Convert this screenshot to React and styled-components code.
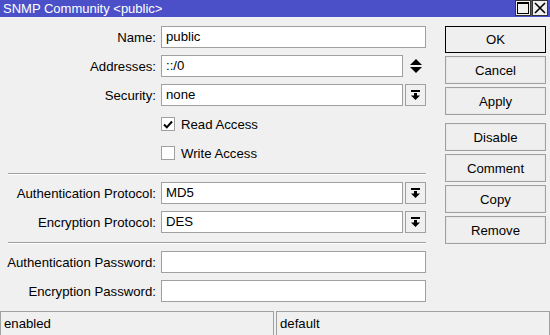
import React from 'react'
import styled, { createGlobalStyle } from 'styled-components'

const GlobalStyle = createGlobalStyle`
  html, body {
    margin: 0;
    padding: 0;
    background: #f0f0f0;
  }
  * { box-sizing: border-box; }
`

const Window = styled.div`
  width: 550px;
  height: 335px;
  display: flex;
  flex-direction: column;
  background: #f0f0f0;
  font-family: "Liberation Sans", Arial, sans-serif;
  font-size: 13.2px;
  color: #000;
  overflow: hidden;
`

const TitleBar = styled.div`
  height: 17px;
  background: #4b50c8;
  color: #fff;
  display: flex;
  align-items: center;
  padding-left: 3px;
  padding-right: 2px;
  font-size: 13px;
`

const TitleText = styled.div`
  flex: 1;
  line-height: 17px;
`

const TitleButton = styled.div`
  width: 16px;
  height: 16px;
  margin-top: -1px;
  background: #f0f0f0;
  border: 1px solid #333;
  display: flex;
  align-items: center;
  justify-content: center;
  & + & { margin-left: 1px; }
`

const Body = styled.div`
  display: flex;
  padding-top: 9px;
`

const Form = styled.div`
  display: grid;
  grid-template-columns: 156px 265px;
  column-gap: 5px;
  row-gap: 7px;
  align-items: center;
  width: 426px;
`

const Label = styled.div`
  text-align: right;
  white-space: nowrap;
`

const Field = styled.div`
  display: flex;
  gap: 2px;
`

const Input = styled.div`
  flex: 1;
  height: 22px;
  background: #fff;
  border: 1px solid #a0a0a0;
  padding-left: 4px;
  line-height: 20px;
`

const DropButton = styled.div`
  width: 21px;
  height: 22px;
  border: 1px solid #a0a0a0;
  background: #f0f0f0;
  display: flex;
  align-items: center;
  justify-content: center;
`

const Spinner = styled.div`
  width: 21px;
  height: 22px;
  display: flex;
  align-items: center;
  justify-content: center;
`

const CheckRow = styled.label`
  grid-column: 2 / 3;
  height: 22px;
  display: flex;
  align-items: center;
  gap: 6px;
`

const Box = styled.div`
  width: 14px;
  height: 14px;
  background: #fff;
  border: 1px solid #a0a0a0;
  display: flex;
  align-items: center;
  justify-content: center;
`

const Separator = styled.div`
  grid-column: 1 / -1;
  margin: 2px 0 0 8px;
  height: 2px;
  border-top: 1px solid #a0a0a0;
  border-bottom: 1px solid #fff;
`

const Buttons = styled.div`
  display: flex;
  flex-direction: column;
  margin-left: 19px;
  width: 101px;
`

const Button = styled.div`
  height: ${p => (p.$default ? '27px' : '28px')};
  border: 1px solid ${p => (p.$default ? '#000' : '#a0a0a0')};
  box-shadow: inset 0 0 0 1px ${p => (p.$default ? '#f0f0f0' : '#e8e8e8')};
  background: #efefef;
  display: flex;
  align-items: center;
  justify-content: center;
  margin-bottom: ${p => (p.$groupEnd ? '8px' : '3px')};
`

const StatusBar = styled.div`
  margin-top: auto;
  height: 24px;
  display: flex;
  gap: 2px;
`

const StatusCell = styled.div`
  flex: ${p => (p.$w ? `0 0 ${p.$w}px` : '1')};
  border-top: 1px solid #a0a0a0;
  border-left: 1px solid #a0a0a0;
  border-right: 1px solid #a0a0a0;
  padding-left: 3px;
  line-height: 24px;
`

const DropIcon = () => (
  <svg width="9" height="10" viewBox="0 0 9 10">
    <rect x="0" y="0" width="9" height="2" fill="#000" />
    <rect x="3" y="3" width="3" height="3" fill="#000" />
    <polygon points="0,5.5 9,5.5 4.5,10" fill="#000" />
  </svg>
)

const SpinIcon = () => (
  <svg width="12" height="14" viewBox="0 0 12 14">
    <polygon points="0,6 12,6 6,0" fill="#000" />
    <polygon points="0,8 12,8 6,14" fill="#000" />
  </svg>
)

const Check = () => (
  <svg width="10" height="9" viewBox="0 0 10 9">
    <polyline points="1,4.5 3.8,7.3 9,1.5" fill="none" stroke="#000" strokeWidth="2" />
  </svg>
)

const MaxIcon = () => (
  <svg width="12" height="12" viewBox="0 0 12 12">
    <rect x="0.5" y="0.5" width="11" height="11" fill="none" stroke="#000" />
    <rect x="0" y="0" width="12" height="2" fill="#000" />
  </svg>
)

const CloseIcon = () => (
  <svg width="12" height="12" viewBox="0 0 12 12">
    <path d="M1 1 L11 11 M11 1 L1 11" stroke="#000" strokeWidth="1.6" />
  </svg>
)

const App = () => {
  return (
    <Window>
      <GlobalStyle />
      <TitleBar>
        <TitleText>SNMP Community &lt;public&gt;</TitleText>
        <TitleButton><MaxIcon /></TitleButton>
        <TitleButton><CloseIcon /></TitleButton>
      </TitleBar>
      <Body>
        <Form>
          <Label>Name:</Label>
          <Field><Input>public</Input></Field>

          <Label>Addresses:</Label>
          <Field><Input>::/0</Input><Spinner><SpinIcon /></Spinner></Field>

          <Label>Security:</Label>
          <Field><Input>none</Input><DropButton><DropIcon /></DropButton></Field>

          <CheckRow><Box><Check /></Box>Read Access</CheckRow>
          <CheckRow><Box />Write Access</CheckRow>

          <Separator />

          <Label>Authentication Protocol:</Label>
          <Field><Input>MD5</Input><DropButton><DropIcon /></DropButton></Field>

          <Label>Encryption Protocol:</Label>
          <Field><Input>DES</Input><DropButton><DropIcon /></DropButton></Field>

          <Separator />

          <Label>Authentication Password:</Label>
          <Field><Input /></Field>

          <Label>Encryption Password:</Label>
          <Field><Input /></Field>
        </Form>
        <Buttons>
          <Button $default>OK</Button>
          <Button>Cancel</Button>
          <Button $groupEnd>Apply</Button>
          <Button>Disable</Button>
          <Button>Comment</Button>
          <Button>Copy</Button>
          <Button>Remove</Button>
        </Buttons>
      </Body>
      <StatusBar>
        <StatusCell $w={274}>enabled</StatusCell>
        <StatusCell>default</StatusCell>
      </StatusBar>
    </Window>
  )
}

export default App
